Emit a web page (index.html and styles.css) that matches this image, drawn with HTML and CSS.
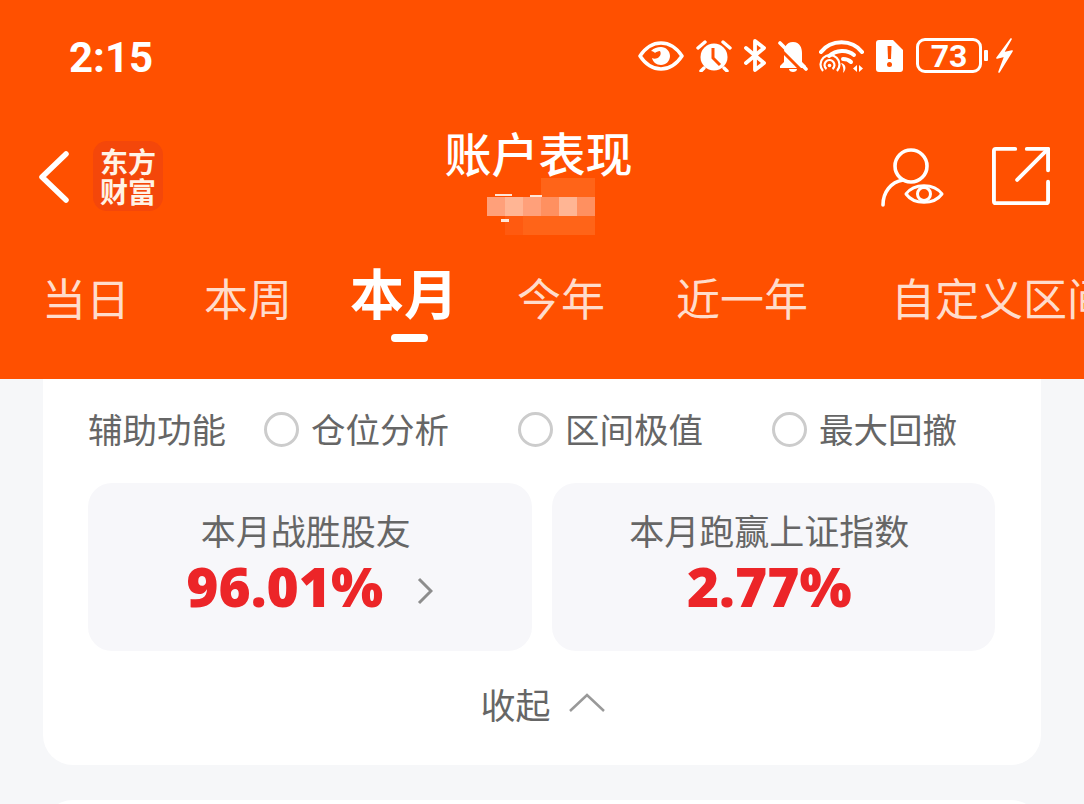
FILE: index.html
```html
<!DOCTYPE html>
<html lang="zh-CN">
<head>
    <meta charset="UTF-8">
    <meta name="viewport" content="width=device-width, initial-scale=1.0">
    <title>账户表现</title>
    <link rel="stylesheet" href="styles.css">
</head>
<body>
<header class="header">
    <div class="status">
        <span class="time">2:15</span>
        <div class="status-icons">
            <svg class="ic-eye" width="46" height="30" viewBox="0 0 46 30"><path d="M2 15C8 6 15 2 23 2s15 4 21 13c-6 9-13 13-21 13S8 24 2 15z" fill="none" stroke="#fff" stroke-width="3.5" stroke-linejoin="round"/><path d="M13 10c3-3 6-4 10-4 5 0 9 4 9 9s-4 9-9 9-8-3-9-7c2 1 5 1 7-1s2-4 1-6c-2 0-4 1-5 2-1-1-2-2-4-2z" fill="#fff"/></svg>
            <svg class="ic-alarm" width="36" height="33" viewBox="0 0 36 33"><circle cx="18" cy="18" r="13.5" fill="#fff"/><path d="M17 9v10l7 7" fill="none" stroke="#ff5000" stroke-width="3"/><path d="M2 9l7-6M34 9l-7-6M8 29l-3 3M28 29l3 3" stroke="#fff" stroke-width="3.400" stroke-linecap="round"/></svg>
            <svg class="ic-bt" width="22" height="33" viewBox="0 0 22 33"><path d="M2 9l18 15-9 7V2l9 7L2 24" fill="none" stroke="#fff" stroke-width="3.800" stroke-linejoin="round" stroke-linecap="round"/></svg>
            <svg class="ic-bell" width="30" height="32" viewBox="0 0 30 32"><path d="M15 2C8 2 6 8 6 13v9l-4 4v2h26v-2l-4-4v-9C24 8 22 2 15 2z" fill="#fff"/><path d="M11 29h8c0 4-8 4-8 0z" fill="#fff"/><path d="M-1 6l26 26" stroke="#ff5000" stroke-width="3"/><path d="M2 3l26 26" stroke="#fff" stroke-width="3.600" stroke-linecap="round"/></svg>
            <svg class="ic-wifi" width="45" height="35" viewBox="0 0 45 35"><g fill="none" stroke="#fff"><path d="M2 14C12 1 33 1 43 14" stroke-width="4" stroke-linecap="round"/><path d="M10 18c7-6 18-7 25-1" stroke-width="4" stroke-linecap="round"/><path d="M24 21c3 0 6 1 8 3" stroke-width="4" stroke-linecap="round"/><path d="M4 33a9.500 9.500 0 1 1 14 0" stroke-width="2.200"/><path d="M7.500 31a5 5 0 1 1 6 0" stroke-width="2.200"/></g><circle cx="10.500" cy="27.500" r="1.800" fill="#fff"/><path d="M22 25c5 1 6 6 2 10 1-4 0-7-2-10zM38 27v7l-4-3.500zM40 27l4 3.500-4 3.500z" fill="#fff"/></svg>
            <svg class="ic-sim" width="27" height="32" viewBox="0 0 27 32"><path d="M3 0h14l10 10v19a3 3 0 0 1-3 3H3a3 3 0 0 1-3-3V3a3 3 0 0 1 3-3z" fill="#fff"/><path d="M11.500 6h4l-.5 13h-3z" fill="#ff5000"/><circle cx="13.500" cy="24.500" r="2.500" fill="#ff5000"/></svg>
            <div class="battery"><span class="battery-num">73</span></div>
            <span class="battery-nub"></span>
            <svg class="ic-bolt" width="17" height="35" viewBox="0 0 17 35"><path d="M15 1L1 20l8-2-6 16 13-21-9 2z" fill="#fff" stroke="#fff" stroke-width="1.600" stroke-linejoin="round"/></svg>
        </div>
    </div>

    <div class="nav">
        <div class="nav-left">
            <svg width="32" height="52" viewBox="0 0 32 52"><path d="M28 3L4 26l24 23" fill="none" stroke="#fff" stroke-width="5.500" stroke-linecap="round" stroke-linejoin="round"/></svg>
            <div class="logo">东方<br>财富</div>
        </div>
        <div class="nav-title">
            <h1>账户表现</h1>
            <div class="mosaic">
                <i></i><i></i><i></i><i class="m1"></i><i class="m1"></i><i class="m1"></i>
                <i class="m3"></i><i class="m4"></i><i class="m3"></i><i class="m2"></i><i class="m4"></i><i class="m2"></i>
                <i></i><i class="m0"></i><i class="m1"></i><i class="m1"></i><i class="m1"></i><i class="m1"></i>
                <b class="bit bit-a"></b><b class="bit bit-b"></b><b class="bit bit-c"></b>
            </div>
        </div>
        <div class="nav-right">
            <svg width="64" height="62" viewBox="0 0 64 62"><g fill="none" stroke="#fff" stroke-linecap="round" stroke-linejoin="round"><circle cx="31" cy="19" r="16" stroke-width="3.600"/><path d="M3 58c0-13 8-23 20-25" stroke-width="3.600"/><path d="M26 47c8-11 28-11 36 0-8 11-28 11-36 0z" stroke-width="3"/><circle cx="44" cy="47" r="6.500" stroke-width="3"/></g></svg>
            <svg width="58" height="58" viewBox="0 0 60 60"><g fill="none" stroke="#fff" stroke-width="4" stroke-linecap="round" stroke-linejoin="round"><path d="M24 2H4a2 2 0 0 0-2 2v52a2 2 0 0 0 2 2h52a2 2 0 0 0 2-2V36"/><path d="M36 2h22v22"/><path d="M58 2L26 34"/></g></svg>
        </div>
    </div>

    <div class="tabs">
        <span class="tab">当日</span>
        <span class="tab tab-2">本周</span>
        <span class="tab tab-active">本月</span>
        <span class="tab tab-4">今年</span>
        <span class="tab tab-5">近一年</span>
        <span class="tab tab-6">自定义区间</span>
    </div>
</header>

<main class="content">
    <section class="card">
        <div class="aux">
            <span class="aux-title">辅助功能</span>
            <label class="aux-item"><i class="radio"></i>仓位分析</label>
            <label class="aux-item"><i class="radio"></i>区间极值</label>
            <label class="aux-item"><i class="radio"></i>最大回撤</label>
        </div>
        <div class="stats">
            <div class="stat">
                <div class="stat-label">本月战胜股友</div>
                <div class="stat-value stat-link">96.01%</div>
                <svg class="stat-arrow" width="16" height="28" viewBox="0 0 16 28"><path d="M2 2l12 12L2 26" fill="none" stroke="#8d8d8d" stroke-width="3"/></svg>
            </div>
            <div class="stat">
                <div class="stat-label">本月跑赢上证指数</div>
                <div class="stat-value">2.77%</div>
            </div>
        </div>
        <div class="collapse">
            <span>收起</span>
            <svg width="36" height="20" viewBox="0 0 36 20"><path d="M1 18L18 2l17 16" fill="none" stroke="#999" stroke-width="2.500"/></svg>
        </div>
    </section>
    <section class="card card-next"></section>
</main>
</body>
</html>
```

FILE: styles.css
```css
* {
    box-sizing: border-box;
}

html, body {
    height: 100%;
}

body {
    margin: 0;
    overflow: hidden;
    background-color: #f6f7f9;
    font-family: "Noto Sans CJK SC", "Noto Sans", sans-serif;
}

.header {
    height: 379px;
    background-color: #ff5000;
    color: #fff;
    overflow: hidden;
}

.status {
    height: 115px;
    display: flex;
    justify-content: space-between;
    padding: 38px 71px 0 69px;
}

.time {
    font-family: "Roboto", sans-serif;
    font-weight: 700;
    font-size: 42px;
    line-height: 40px;
}

.status-icons {
    display: flex;
    align-items: center;
    height: 35px;
}

.ic-alarm { margin-left: 12px; }
.ic-bt { margin-left: 12px; }
.ic-bell { margin-left: 12px; }
.ic-wifi { margin-left: 11px; }
.ic-sim { margin-left: 12px; }

.battery {
    margin-left: 13px;
    width: 66px;
    height: 35px;
    border: 3px solid #fff;
    border-radius: 9px;
    display: flex;
    align-items: center;
    justify-content: center;
}

.battery-num {
    font-family: "Roboto", sans-serif;
    font-weight: 700;
    font-size: 32px;
    line-height: 1;
}

.battery-nub {
    width: 4px;
    height: 11px;
    margin-left: 2px;
    background-color: #fff;
    border-radius: 1px;
}

.ic-bolt { margin-left: 8px; }

.nav {
    height: 125px;
    display: flex;
    align-items: flex-start;
    justify-content: space-between;
    padding: 0 34px 0 38px;
}

.nav-left {
    display: flex;
    align-items: flex-start;
    gap: 23px;
}

.nav-left svg {
    margin-top: 36px;
}

.logo {
    width: 70px;
    height: 70px;
    margin-top: 26px;
    border-radius: 14px;
    background-color: #f4470a;
    color: #fff3e6;
    font-weight: 700;
    font-size: 28px;
    line-height: 30px;
    text-align: center;
    padding-top: 5px;
    white-space: nowrap;
}

.nav-title {
    width: 200px;
    margin-left: 34px;
    text-align: center;
    position: relative;
}

h1 {
    margin: 9px 0 0;
    font-size: 47px;
    font-weight: 500;
    line-height: 56px;
    white-space: nowrap;
}

/* hidden account name */
.mosaic {
    position: absolute;
    left: 48px;
    top: 63px;
    display: grid;
    grid-template-columns: repeat(6, 18px);
    grid-auto-rows: 19px;
}

.m0 { background-color: #ff5a10; }
.m1 { background-color: #ff6418; }
.m2 { background-color: #ff9060; }
.m3 { background-color: #ffa07a; }
.m4 { background-color: #ffb594; }

.bit {
    position: absolute;
    background-color: #ffe6d8;
}

.bit-a { left: 8px; top: 16px; width: 17px; height: 2px; }
.bit-b { left: 43px; top: 17px; width: 12px; height: 2px; }
.bit-c { left: 14px; top: 41px; width: 8px; height: 3px; }

.nav-right {
    display: flex;
    gap: 48px;
    padding-top: 32px;
}

.tabs {
    display: flex;
    align-items: flex-start;
    padding-left: 42px;
    white-space: nowrap;
    font-size: 44px;
    line-height: 60px;
    color: #ffdccb;
}

.tab {
    flex-shrink: 0;
    padding-top: 27px;
}

.tab-2 { margin-left: 74px; }
.tab-4 { margin-left: 59px; }
.tab-5 { margin-left: 71px; }
.tab-6 { margin-left: 83px; }

.tab-active {
    position: relative;
    margin-left: 58px;
    padding-top: 22px;
    color: #fff;
    font-size: 54px;
    font-weight: 700;
}

.tab-active::after {
    content: "";
    position: absolute;
    left: 41px;
    top: 94px;
    width: 37px;
    height: 8px;
    border-radius: 4px;
    background-color: #fff;
}

.content {
    height: 425px;
    overflow: hidden;
    padding: 0 43px;
}

.card {
    height: 386px;
    background-color: #fff;
    border-radius: 0 0 30px 30px;
    padding: 0 46px 0 45px;
}

.card-next {
    margin-top: 35px;
    border-radius: 30px 30px 0 0;
}

.aux {
    display: flex;
    align-items: center;
    height: 104px;
    padding-bottom: 6px;
    font-size: 34.500px;
    color: #666;
    white-space: nowrap;
}

.aux-title {
    margin-right: 38px;
}

.aux-item {
    display: flex;
    align-items: center;
    gap: 12px;
    margin-right: 69px;
}

.aux-item:last-child {
    margin-right: 0;
}

.radio {
    flex-shrink: 0;
    width: 35px;
    height: 35px;
    margin-top: 2px;
    border: 3px solid #ccc;
    border-radius: 50%;
}

.stats {
    display: flex;
    gap: 20px;
}

.stat {
    flex: 1;
    height: 168px;
    background-color: #f7f7fa;
    border-radius: 24px;
    text-align: center;
    padding: 20px 8px 0 0;
    position: relative;
}

.stat-label {
    font-size: 35px;
    line-height: 53px;
    color: #666;
    white-space: nowrap;
}

.stat-value {
    font-family: "Open Sans", sans-serif;
    font-weight: 800;
    font-size: 55px;
    line-height: 60px;
    color: #ec2528;
}

.stat-link {
    padding-right: 42px;
}

.stat-arrow {
    position: absolute;
    left: 329px;
    top: 94px;
}

.collapse {
    display: flex;
    align-items: center;
    justify-content: center;
    gap: 18px;
    height: 104px;
    padding-left: 2px;
    font-size: 35px;
    color: #666;
}
```
